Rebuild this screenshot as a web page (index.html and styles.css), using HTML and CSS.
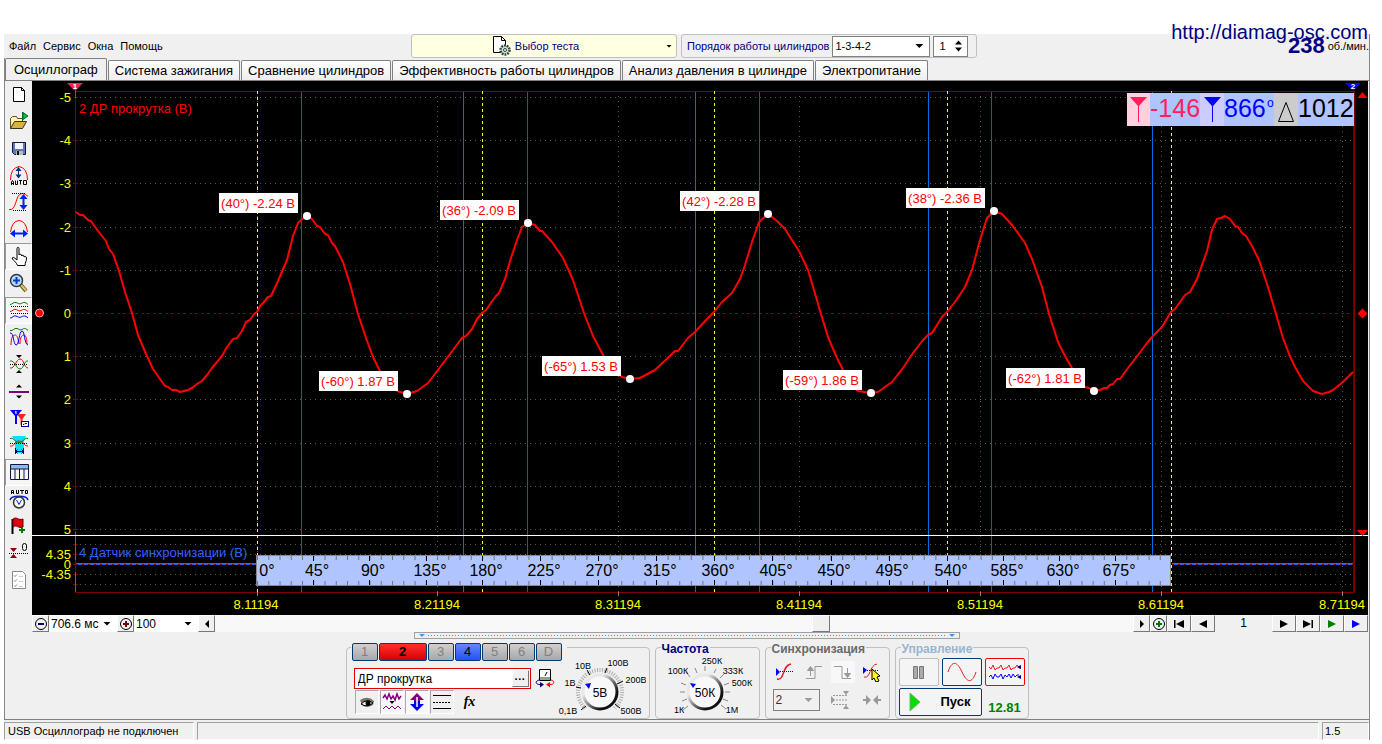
FILE: index.html
```html
<!DOCTYPE html>
<html lang="ru">
<head>
<meta charset="utf-8">
<title>Осциллограф</title>
<link rel="stylesheet" href="styles.css">
</head>
<body>
<div class="window">
  <header class="topbar">
    <nav class="menu">
      <button>Файл</button><button>Сервис</button><button>Окна</button><button>Помощь</button>
    </nav>
    <button class="test-picker">
      <svg class="test-icon" viewBox="0 0 20 22"><path d="M2.500 1.500h8l4 4v12h-12z" fill="#fff" stroke="#000"/><path d="M10.500 1.500v4h4" fill="none" stroke="#000"/><circle cx="14" cy="15" r="4.500" fill="#cfe0cf" stroke="#344" stroke-width="2.500" stroke-dasharray="1.800 1"/><circle cx="14" cy="15" r="1.500" fill="#fff" stroke="#344"/></svg>
      <span>Выбор теста</span><i class="caret"></i>
    </button>
    <div class="order">
      <label for="order">Порядок работы цилиндров</label>
      <span class="drop"><select id="order"><option>1-3-4-2</option></select></span>
      <span class="spin"><input type="number" value="1" aria-label="Цилиндр"><svg viewBox="0 0 9 16"><path d="M4.500 1L9 6H0zM4.500 15L9 10H0z"/></svg></span>
    </div>
    <div class="rpm"><b>238</b><span>об./мин.</span></div>
    <a class="site" href="#">http://diamag-osc.com</a>
  </header>

  <div class="body">
  <div class="tabs" role="tablist">
    <button role="tab" class="tab active">Осциллограф</button>
    <button role="tab" class="tab">Система зажигания</button>
    <button role="tab" class="tab">Сравнение цилиндров</button>
    <button role="tab" class="tab">Эффективность работы цилиндров</button>
    <button role="tab" class="tab">Анализ давления в цилиндре</button>
    <button role="tab" class="tab">Электропитание</button>
  </div>

  <main class="main">
    <div class="tools">
      <button aria-label="Новый"><svg viewBox="0 0 20 20"><path d="M4.500 3.500h8l3 3v11h-11z" fill="#fff" stroke="#000"/><path d="M12.500 3.500v3h3" fill="none" stroke="#000"/></svg></button>
      <button aria-label="Открыть"><svg viewBox="0 0 20 20"><path d="M1.500 17.500v-10l2-2h4l1 2h5v3" fill="#fff3a8" stroke="#665020"/><path d="M1.500 17.500l4-7h12l-4 7z" fill="#d8b048" stroke="#443010"/><path d="M13.500 1v9M14 1.500l5 3.500-5 3.500z" fill="#00c040" stroke="#007020"/></svg></button>
      <button aria-label="Сохранить"><svg viewBox="0 0 20 20"><path d="M3.500 4.500h13v12h-11l-2-2z" fill="#6674b8" stroke="#111840"/><path d="M6 5h8v6H6z" fill="#f4f6ff"/><path d="M7 13h7v4H7z" fill="#bbb"/><path d="M8 13h2v4H8z" fill="#111"/></svg></button>
      <button aria-label="Авто"><svg viewBox="0 0 20 20"><path d="M1.500 15Q1.500 3 10 1.500Q18.500 3 18.500 15" fill="none" stroke="#f00"/><path d="M9.500 3v9" stroke="#003080"/><path d="M9.500 2l3 4h-6zM9.500 13.500l3-4h-6z" fill="#003080"/><g fill="none" stroke="#000" stroke-width="1"><path d="M2.500 20v-3l1-1.500 1 1.500v3M2.500 18.500h2M6.500 15.500v4h2v-4M10 15.500h3M11.500 15.500v4M14.500 15.500h3v4h-3z"/></g></svg></button>
      <button aria-label="Амплитуда"><svg viewBox="0 0 20 20"><path d="M0 17.500c8 2 6-16 13-16 3 0 5 2 6 3" fill="none" stroke="#f00"/><path d="M3 1.500h14M4 18.500h14" stroke="#000" stroke-dasharray="1 1"/><path d="M14.500 4v12" stroke="#0020ff" stroke-width="2"/><path d="M14.500 2l4 5h-8zM14.500 18l4-5h-8z" fill="#0020ff"/></svg></button>
      <button aria-label="Период"><svg viewBox="0 0 20 20"><path d="M1.500 13Q3 2 10 1.500Q17 2 18.500 13" fill="none" stroke="#f00"/><path d="M4 14.500h12" stroke="#0020ff" stroke-width="2"/><path d="M1 14.500l5-4v8zM19 14.500l-5-4v8z" fill="#0020ff"/></svg></button>
      <button class="on hatch" aria-label="Рука"><svg viewBox="0 0 20 20"><path d="M8.500 19.500c-1-3-3-4-5-6.500-1-2 1-2 2-1l2.500 2V2.500c0-1.500 2-1.500 2 0V9c0-1 2.500-1 2.500 0v1c0-1 2.500-1 2.500 0v1c1-1 2.500-.5 2.500 1 0 4-1.500 4-1.500 7.500z" fill="#fff" stroke="#000"/></svg></button>
      <button aria-label="Масштаб"><svg viewBox="0 0 20 20"><path d="M12 12l5 6" stroke="#6a5a20" stroke-width="4"/><path d="M12 12l5 5.500" stroke="#e0c860" stroke-width="2"/><circle cx="7.500" cy="7.500" r="6" fill="#b8dcff" stroke="#334" stroke-width="1.500"/><path d="M7.500 4v7M4 7.500h7" stroke="#0040c0" stroke-width="2"/></svg></button>
      <button class="on" aria-label="Раздельно"><svg viewBox="0 0 20 20" fill="none"><path d="M1 4.500c3 0 3-3 6-2s3 2 5 1 4-2 7 1" stroke="#008000"/><path d="M1 11.500c3 0 3-3 6-2s3 2 5 1 4-2 7 1" stroke="#f00"/><path d="M1 18c3 0 3-3 6-2s3 2 5 1 4-2 7 1" stroke="#0000ff"/><path d="M2 6.500h17M2 13.500h17" stroke="#000" stroke-dasharray="1 1"/></svg></button>
      <button aria-label="Вместе"><svg viewBox="0 0 20 20" fill="none"><path d="M1 3.500c3 1 4-3 7-2s3 2 5 1 3-2 6 1" stroke="#008000"/><path d="M2 18C2 10 4 8 6 8s3 3 4 9M11 17c0-7 2-9 4-9s3 5 3 9" stroke="#f00"/><path d="M1 6c4-1 3 11 6 12s3-14 6-14 2 13 6 14" stroke="#0000ff"/></svg></button>
      <button aria-label="Наложение"><svg viewBox="0 0 20 20" fill="none"><path d="M1 7c5-1 6 8 10 8s4-9 8-8" stroke="#008000"/><path d="M1 14c5 1 6-9 10-9s4 9 8 9" stroke="#f00"/><path d="M1 10.500h18" stroke="#000" stroke-dasharray="1 1"/><path d="M7 1h6l-3 3zM7 19h6l-3-3z" fill="#000"/></svg></button>
      <button aria-label="Ноль"><svg viewBox="0 0 20 20"><path d="M0 11h20" stroke="#800080" stroke-width="2"/><path d="M7 6.500h6l-3-3zM7 14.500h6l-3 3z"/></svg></button>
      <button aria-label="Маркеры"><svg viewBox="0 0 20 20"><path d="M8 6h9l-3.500 5v6h-2v-6z" fill="#ff2020"/><path d="M1 2h12L8 8v8H6V8z" fill="#0000ff"/><path d="M7 3v3M6 4h1" stroke="#fff"/><rect x="12.500" y="13.500" width="7" height="5" fill="#fff" stroke="#0000a0"/><path d="M14 16.500h1l1-1h2" stroke="#0000a0" fill="none"/></svg></button>
      <button aria-label="Интервал"><svg viewBox="0 0 20 20" fill="none"><path d="M3 1h14l-2 5v12H6V6z" fill="#00e5ff"/><path d="M1 3.500c5-1 4 4 9 4s4-5 9-4" stroke="#008000"/><path d="M1 11c5 1 4-5 9-5s4 5 9 5" stroke="#f00"/><path d="M1 8.500h18" stroke="#000" stroke-dasharray="1 1"/><path d="M6.500 13v6M14.500 13v6M6.500 16.500h8M8.500 14.500l-2 2 2 2M12.500 14.500l2 2-2 2" stroke="#000080"/></svg></button>
      <button class="on" aria-label="Таблица"><svg viewBox="0 0 20 20"><rect x="2" y="3" width="17" height="4" fill="#8fb8f0"/><path d="M1.500 2.500h18v15h-18zM1.500 7h18M6 7v10M10.500 7v10M15 7v10" fill="none" stroke="#101840"/></svg></button>
      <button aria-label="Авто вольтметр"><svg viewBox="0 0 20 20"><g fill="none" stroke="#000"><path d="M2.500 5V1.500h2V5M2.500 3.500h2M7.500 1v3.500h2V1M11 1.500h4M13 1.500V5M16.500 1.500h2v3h-2z"/></g><path d="M1 11c1-5 17-5 18 0" fill="none" stroke="#0020c0" stroke-width="1.500"/><circle cx="10" cy="13.500" r="5.500" fill="#fff" stroke="#333" stroke-width="1.500"/><path d="M7.500 11l2.500 4.500 2.500-4.500" fill="none" stroke="#0020c0"/></svg></button>
      <button aria-label="Флажок"><svg viewBox="0 0 20 20"><path d="M3.500 3v15" stroke="#000" stroke-width="2"/><path d="M4 3c4-3 5 2 10 0v8c-5 2-6-3-10 0z" fill="#e00010" stroke="#600"/><path d="M13 11v6M10 14h6" stroke="#007800" stroke-width="2"/></svg></button>
      <button aria-label="Сброс нуля"><svg viewBox="0 0 20 20"><path d="M1 5h7l-3.500 4zM1 15h7l-3.500-4z" fill="#900010"/><path d="M0 10.500h19" stroke="#000" stroke-dasharray="1 1"/><rect x="13.500" y=".5" width="4" height="7" rx="2" fill="none" stroke="#000"/></svg></button>
      <button aria-label="Отчёт"><svg viewBox="0 0 20 20" fill="none" stroke="#888"><path d="M3.500 1.500h10l3 3v14h-13z" fill="#fff"/><path d="M5 5.500l1 1 2-2M5 10.500l1 1 2-2M5 15.500l1 1 2-2" /><path d="M10 6.500h4M10 11.500h4M10 16.500h4" stroke="#ccc"/></svg></button>
    </div>

    <div class="scope">
      <svg class="plot" viewBox="32 81 1336 534">
        <rect x="32" y="81" width="1336" height="534"/>
        <path class="grid" d="M75 97.500H1353M75 140.500H1353M75 183.500H1353M75 227.500H1353M75 270.500H1353M75 356.500H1353M75 399.500H1353M75 443.500H1353M75 486.500H1353M75 529.500H1353M75 544.500H1353M75 554.500H1353M75 574.500H1353M75 584.500H1353"/>
        <path class="grid" d="M257.500 96V592M437.500 96V592M618.500 96V592M799.500 96V592M980.500 96V592M1161.500 96V592M1342.500 96V592"/>
        <path d="M75 313.500H1353" stroke="#800000" stroke-dasharray="3 3"/>
        <path class="axis" d="M75.500 592.500V91.500H1354.500V592.500zM73 97.500h5M73 140.500h5M73 183.500h5M73 227.500h5M73 270.500h5M73 313.500h5M73 356.500h5M73 399.500h5M73 443.500h5M73 486.500h5M73 529.500h5M73 544.500h5M73 554.500h5M73 564.500h5M73 574.500h5M73 584.500h5"/>
        <path d="M75.500 90v8M75.500 532v28M75.500 572v20" stroke="#ff2060"/>
        <path d="M257.500 592v4M437.500 592v4M618.500 592v4M799.500 592v4M980.500 592v4M1161.500 592v4M1342.500 592v4" stroke="#888"/>
        <path d="M301.500 92V592M527.500 92V592M759.500 92V592M991.500 92V592" stroke="#e01010"/>
        <path d="M463.500 92V592M695.500 92V592M928.500 92V592M1152.500 92V592" stroke="#0070e0"/>
        <path d="M257.500 91V592M482.500 91V592M714.500 91V592M947.500 91V592M1171.500 91V592" stroke="#ff0" stroke-dasharray="3 3"/>
        <path d="M1353.500 88V592" stroke="#00f"/>
        <path d="M32 535.500H1368" stroke="#fff"/>
        <path d="M76 564H257M1172 564H1353" stroke="#3060ff" stroke-width="2"/>
        <path d="M76 564.500H257M1172 564.500H1353" stroke="#800000" stroke-dasharray="2 4"/>
        <polyline class="wave" points="76,212 80,215 83,215 88,220 91,221 98,231 106,241 109,249 113,254 119,271 125,292 132,313 138,335 146,354 153,369 160,379 165,386 168,387 172,390 176,390 180,392 184,391 188,390 192,388 197,384 202,381 207,375 212,368 217,362 222,356 227,347 233,339 237,338 242,331 246,322 250,320 254,314 257,312 260,306 263,303 268,297 271,296 278,281 287,260 293,236 298,223 301,220 307,216 312,219 317,226 320,227 325,234 328,235 332,243 335,246 343,262 350,284 358,314 366,338 373,357 380,371 388,384 397,391 407,394 417,391 428,383 438,370 450,354 462,338 466,336 472,329 477,319 482,313 486,310 493,300 496,296 499,293 505,279 510,261 517,240 522,227 528,223 535,225 540,231 542,231 552,242 563,258 573,280 584,313 593,336 603,355 612,370 622,377 630,379 640,378 655,370 672,354 675,351 678,351 688,338 695,332 707,319 714,312 722,302 732,293 740,279 745,265 752,242 759,222 768,214 777,221 785,229 790,237 799,251 808,270 814,290 821,314 828,337 837,358 843,370 850,384 858,391 871,393 878,392 892,382 903,368 913,353 923,340 928,335 932,333 942,317 947,312 955,302 965,287 972,270 980,240 987,218 994,211 1002,214 1012,225 1020,236 1025,243 1032,259 1042,287 1049,314 1058,342 1065,356 1072,368 1085,387 1089,388 1094,391 1100,390 1104,388 1107,388 1110,385 1113,384 1117,379 1120,379 1128,368 1138,355 1147,343 1153,336 1162,327 1171,312 1175,309 1185,295 1190,292 1197,279 1207,251 1212,230 1217,219 1221,218 1225,216 1230,219 1235,226 1238,227 1242,233 1246,236 1252,246 1259,260 1268,287 1276,314 1283,338 1289,354 1295,367 1303,381 1313,391 1322,394 1329,392 1333,390 1343,382 1353,372"/>

        <g class="ylab">
          <text x="71" y="102">-5</text><text x="71" y="145">-4</text><text x="71" y="188">-3</text><text x="71" y="232">-2</text><text x="71" y="275">-1</text><text x="71" y="318">0</text><text x="71" y="361">1</text><text x="71" y="404">2</text><text x="71" y="448">3</text><text x="71" y="491">4</text><text x="71" y="534">5</text>
          <text x="71" y="559">4.35</text><text x="71" y="569">0</text><text x="71" y="579">-4.35</text>
        </g>
        <g class="xlab">
          <text x="256" y="609">8.11194</text><text x="437" y="609">8.21194</text><text x="618" y="609">8.31194</text><text x="799" y="609">8.41194</text><text x="980" y="609">8.51194</text><text x="1161" y="609">8.61194</text><text x="1342" y="609">8.71194</text>
        </g>
        <text class="ch-red" x="79" y="113">2 ДР прокрутка (В)</text>
        <text class="ch-blue" x="79" y="557">4 Датчик синхронизации (В)</text>

        <rect x="256.500" y="555.500" width="914" height="30" fill="#b0c4ff" stroke="#888"/>
        <g class="ticks">
          <path pathLength="20" d="M257 558H482"/><path pathLength="20" d="M482 558H714"/><path pathLength="20" d="M714 558H947"/><path pathLength="20" d="M947 558H1171"/>
          <path pathLength="20" d="M257 583H482"/><path pathLength="20" d="M482 583H714"/><path pathLength="20" d="M714 583H947"/><path pathLength="20" d="M947 583H1171"/>
        </g>
        <path d="M313.500 556v5M313.500 580v5M369.500 556v5M369.500 580v5M426.500 556v5M426.500 580v5M482.500 556v5M482.500 580v5M540.500 556v5M540.500 580v5M598.500 556v5M598.500 580v5M656.500 556v5M656.500 580v5M714.500 556v5M714.500 580v5M772.500 556v5M772.500 580v5M831.500 556v5M831.500 580v5M889.500 556v5M889.500 580v5M947.500 556v5M947.500 580v5M1003.500 556v5M1003.500 580v5M1059.500 556v5M1059.500 580v5M1115.500 556v5M1115.500 580v5" stroke="#000"/>
        <g class="deg">
          <text x="267" y="576">0°</text><text x="317" y="576">45°</text><text x="373" y="576">90°</text><text x="430" y="576">135°</text><text x="486" y="576">180°</text><text x="544" y="576">225°</text><text x="602" y="576">270°</text><text x="660" y="576">315°</text><text x="718" y="576">360°</text><text x="776" y="576">405°</text><text x="834" y="576">450°</text><text x="892" y="576">495°</text><text x="951" y="576">540°</text><text x="1007" y="576">585°</text><text x="1063" y="576">630°</text><text x="1119" y="576">675°</text>
        </g>

        <g fill="#fff">
          <circle cx="307" cy="216" r="4"/><circle cx="528" cy="223" r="4"/><circle cx="768" cy="214" r="4"/><circle cx="994" cy="211" r="4"/>
          <circle cx="407" cy="394" r="4"/><circle cx="630" cy="379" r="4"/><circle cx="871" cy="393" r="4"/><circle cx="1094" cy="391" r="4"/>
          <rect x="219" y="193" width="79" height="20"/><rect x="440" y="200" width="79" height="20"/><rect x="680" y="191" width="79" height="20"/><rect x="906" y="188" width="79" height="20"/>
          <rect x="319" y="371" width="79" height="20"/><rect x="542" y="356" width="79" height="20"/><rect x="783" y="370" width="79" height="20"/><rect x="1006" y="368" width="79" height="20"/>
        </g>
        <g class="peak">
          <text x="258" y="208">(40°) -2.24 В</text><text x="479" y="215">(36°) -2.09 В</text><text x="719" y="206">(42°) -2.28 В</text><text x="945" y="203">(38°) -2.36 В</text>
          <text x="358" y="386">(-60°) 1.87 В</text><text x="581" y="371">(-65°) 1.53 В</text><text x="822" y="385">(-59°) 1.86 В</text><text x="1045" y="383">(-62°) 1.81 В</text>
        </g>

        <rect x="1127" y="93" width="227" height="33" fill="#b0c4ff"/>
        <rect x="1127" y="93" width="23" height="33" fill="#ffd0e0"/><rect x="1200" y="93" width="24" height="33" fill="#ccccff"/><rect x="1274" y="93" width="24" height="33" fill="#ccc"/>
        <path d="M1130 97h17l-8 9v16h-1v-16z" fill="#ff1f5a"/><path d="M1204 97h17l-8 9v16h-1v-16z" fill="#00f"/><path d="M1278.500 121.500l7.500-19 7.500 19z" fill="none" stroke="#000"/>
        <text class="read" x="1150" y="117" fill="#ff1f5a">-146</text><text class="read" x="1224" y="117" fill="#00f">866</text><text x="1267" y="107" class="small-deg">o</text><text class="read" x="1298" y="117" fill="#000">1012</text>

        <path d="M67 83h16l-7 7h-2z" fill="#ff2060"/><path d="M1345 83h16l-7 7h-2z" fill="#00f"/>
        <text class="mark" x="75" y="89">1</text><text class="mark" x="1353" y="89">2</text>
        <circle cx="39.500" cy="313" r="4" fill="#f00" stroke="#faa" stroke-width="1"/>
        <path d="M1357.500 98h10l-5-6zM1357.500 313.500l5-5 5 5-5 5zM1357.500 530h10v1l-5 5-5-5z" fill="#f00"/>
      </svg>

      <div class="scroll">
        <button class="raised sq" aria-label="Уменьшить"><svg viewBox="0 0 14 14"><circle cx="7" cy="7" r="5.500" fill="none" stroke="#000"/><path d="M4 7h6" stroke="#000080" stroke-width="2"/></svg></button>
        <span class="drop flat span-time"><select aria-label="Развёртка"><option>706.6 мс</option></select></span>
        <button class="raised sq" aria-label="Увеличить"><svg viewBox="0 0 14 14"><circle cx="7" cy="7" r="5.500" fill="none" stroke="#000"/><path d="M4 7h6M7 4v6" stroke="#800000" stroke-width="2"/></svg></button>
        <span class="drop flat span-zoom"><select aria-label="Масштаб"><option>100</option></select></span>
        <button class="raised sq" aria-label="Влево"><svg viewBox="0 0 14 14"><path d="M9 3v8L5 7z"/></svg></button>
        <div class="track"><div class="thumb"></div></div>
        <button class="raised sq" aria-label="Вправо"><svg viewBox="0 0 14 14"><path d="M5 3v8l4-4z"/></svg></button>
        <button class="raised sq" aria-label="Добавить"><svg viewBox="0 0 14 14"><circle cx="7" cy="7" r="5.500" fill="none" stroke="#000"/><path d="M4 7h6M7 4v6" stroke="#007800" stroke-width="2"/></svg></button>
        <button class="raised nav" aria-label="В начало"><svg viewBox="0 0 14 14"><path d="M2 3h1.500v8H2zM12 3v8L4 7z"/></svg></button>
        <button class="raised nav" aria-label="Назад"><svg viewBox="0 0 14 14"><path d="M11 3v8L3 7z"/></svg></button>
        <span class="page">1</span>
        <button class="raised nav" aria-label="Вперёд"><svg viewBox="0 0 14 14"><path d="M3 3v8l8-4z"/></svg></button>
        <button class="raised nav" aria-label="В конец"><svg viewBox="0 0 14 14"><path d="M2 3v8l8-4zM10.500 3H12v8h-1.500z"/></svg></button>
        <button class="raised nav" aria-label="Пуск"><svg viewBox="0 0 14 14"><path d="M3 3v8l8-4z" fill="#008000"/></svg></button>
        <button class="raised nav" aria-label="Запись"><svg viewBox="0 0 14 14"><path d="M3 3v8l8-4z" fill="#00f"/></svg></button>
      </div>
    </div>
  </main>

  <div class="splitter"><i class="caret"></i><span></span><i class="caret"></i></div>

  <section class="panels">
    <fieldset class="panel channel">
      <legend class="channels"><button>1</button><button class="red">2</button><button>3</button><button class="blue">4</button><button>5</button><button>6</button><button>D</button></legend>
      <div class="channel-body">
        <div class="channel-left">
          <div class="name-row">
            <span class="name"><input type="text" value="ДР прокрутка" aria-label="Датчик"><button class="raised">···</button></span>
            <svg class="swap" viewBox="0 0 20 20"><path d="M4.500 1.500h11v11h-11z" fill="#fff" stroke="#000"/><path d="M5 9h10v3H5z" fill="#8a8"/><path d="M10 8l2-4" stroke="#000"/><path d="M4 12c-4 1-4 5 2 4.500" fill="none" stroke="#000080"/><path d="M5 14l4 2.500-4 3z" fill="#000080"/><path d="M16 12c4 1 4 5-2 4.500" fill="none" stroke="#f00"/><path d="M15 14l-4 2.500 4 3z" fill="#f00"/></svg>
          </div>
          <div class="modes">
            <button class="on" aria-label="Видимость"><svg viewBox="0 0 20 20"><path d="M3 8q8-5 14 1l-1 4q-7 4-11 0z" fill="#776"/><path d="M4 12q6-6 12-1-6 5-12 1z" fill="#eee" stroke="#000"/><circle cx="11" cy="11" r="2.500"/></svg></button>
            <button class="on hatch" aria-label="Фильтр"><svg viewBox="0 0 20 20" fill="none" stroke="#800080"><path d="M1 6l2-3 2 4 2-5 2 5 2-3 2 4 2-6 2 5 2-3" stroke-width="1.500"/><path d="M1 17l3-3 3 3 3-3 3 3 3-3 3 3"/><path d="M7.500 9h5L10 12z" fill="#000" stroke="none"/></svg></button>
            <button class="on hatch" aria-label="Инверсия"><svg viewBox="0 0 20 20"><path d="M10 1l7 7h-4v3H7V8H3z" fill="#800080"/><path d="M10 19l7-7h-4V9H7v3H3z" fill="#0000ff"/><path d="M10 5v10" stroke="#fff" stroke-width="1.500"/></svg></button>
            <button class="on" aria-label="Пределы"><svg viewBox="0 0 20 20"><path d="M1 3.500h18M1 16.500h18" stroke="#000"/><path d="M1 10.500h18" stroke="#000" stroke-dasharray="2 1"/></svg></button>
            <button class="fx" aria-label="Функция"><i>fx</i></button>
          </div>
        </div>
        <svg class="knob" viewBox="556 656 90 62">
          <defs><linearGradient id="rim" x1="0" y1="0" x2="1" y2="1"><stop offset=".3" stop-color="#e8e8e8"/><stop offset=".75" stop-color="#111"/></linearGradient></defs>
          <circle cx="600" cy="692" r="22" fill="none" stroke="#aaa" stroke-width="4" stroke-dasharray="1 1.500"/>
          <path d="M585 708l-6 8h42l-6-8z" fill="#f0f0f0"/>
          <path d="M586 706l-5 4M581 688l-5-1M590 675l-3-5M605 673l2-5M617 684l6-3M615 704l5 4" stroke="#000"/>
          <circle cx="600" cy="692" r="17" fill="#f8f8f8" stroke="url(#rim)" stroke-width="3"/>
          <path d="M585 684l6-1-2 6z" fill="#00f"/>
          <text x="600" y="697" class="knob-val">5В</text>
          <text x="583" y="669">10В</text><text x="618" y="666">100В</text><text x="570" y="686">1В</text><text x="636" y="683">200В</text><text x="568" y="714">0,1В</text><text x="631" y="714">500В</text>
        </svg>
      </div>
    </fieldset>

    <fieldset class="panel freq">
      <legend class="navy">Частота</legend>
      <svg class="knob" viewBox="658 656 98 62">
        <path d="M687 706l-5 4M686 699l-5 2M684 692h-5M685 685l-5-2M689 677l-4-5M696 673l-2-5M704 671v-5M713 673l2-4M719 678l4-4M723 685l5-2M724 692h5M722 699l5 2M720 705l5 4" stroke="#888"/>
        <circle cx="704" cy="692" r="17" fill="#f8f8f8" stroke="url(#rim)" stroke-width="3"/>
        <path d="M689 683l6 1-3 4z" fill="#00f"/>
        <text x="704" y="697" class="knob-val">50К</text>
        <text x="711" y="664">250К</text><text x="677" y="674">100К</text><text x="732" y="674">333К</text><text x="741" y="686">500К</text><text x="678" y="713">1К</text><text x="731" y="713">1М</text>
      </svg>
    </fieldset>

    <fieldset class="panel sync">
      <legend class="grey">Синхронизация</legend>
      <div class="sync-row">
        <button aria-label="Уровень"><svg viewBox="0 0 20 20" fill="none"><path d="M2 17c8 2 5-14 14-15" stroke="#e02020" stroke-width="1.500"/><path d="M5 9.500h14" stroke="#00f" stroke-dasharray="1 1"/><path d="M1 6v8l4-4z" fill="#00f"/></svg></button>
        <button aria-label="Фронт"><svg viewBox="0 0 20 20" fill="none" stroke="#999"><path d="M2 16.500h9v-12h7M6.500 14V6"/><path d="M3.500 8.500l3-4 3 4z" fill="#999"/></svg></button>
        <button class="hatch" aria-label="Спад"><svg viewBox="0 0 20 20" fill="none" stroke="#999"><path d="M1 4.500h8v12h9M14.500 6v8"/><path d="M11.500 11.500l3 4 3-4z" fill="#999"/></svg></button>
        <button aria-label="Выбор уровня"><svg viewBox="0 0 20 20" fill="none"><path d="M2 15c7 2 5-12 13-13" stroke="#e02020"/><path d="M5 8.500h12" stroke="#00f" stroke-dasharray="1 1"/><path d="M1 5v7l4-4z" fill="#00f"/><path d="M10 7l8 7-3 1 2 4-3 1-2-4-2 2z" fill="#ff0" stroke="#000"/></svg></button>
      </div>
      <div class="sync-row">
        <span class="drop sync-ch"><select aria-label="Канал синхронизации"><option>2</option></select></span>
        <button aria-label="Пределы синхронизации"><svg viewBox="0 0 20 20" fill="#999"><path d="M1 6v8l4-4zM13 1h6l-3 4zM13 19h6l-3-4z"/><path d="M3 5.500h15M3 14.500h15M6 10h12" stroke="#999" stroke-dasharray="2 1"/></svg></button>
        <button aria-label="Сжать"><svg viewBox="0 0 20 20" fill="#999"><path d="M1 9h3V5l5 5-5 5v-4H1zM19 9h-3V5l-5 5 5 5v-4h3z"/></svg></button>
      </div>
    </fieldset>

    <fieldset class="panel ctrl">
      <legend class="pale">Управление</legend>
      <div class="ctrl-grid">
        <button class="plain" aria-label="Пауза"><svg viewBox="0 0 36 24"><path d="M12.500 6.500h4v12h-4zM18.500 6.500h4v12h-4z" fill="#aaa" stroke="#777"/></svg></button>
        <button aria-label="Один канал"><svg viewBox="0 0 36 24"><path d="M4 12C8 0 13 1 18 12s10 12 14 0" fill="none" stroke="#e02020"/></svg></button>
        <button class="hot" aria-label="Все каналы"><svg viewBox="0 0 36 24" fill="none"><path d="M2 7l2 2 2-4 2 5 2-2h2l2-3 2 5 2-2h2l2-3 2 5 2-2h2l2-3 2 3h2" stroke="#e02020"/><path d="M2 17l2-2 2 4 2-5 2 3h2l2-3 2 5 2-4 2 2 2-3 2 4 2-4 2 3 2-2h2" stroke="#00f"/><path d="M34 5v4l-4-2zM34 15v4l-4-2z" fill="#000080"/></svg></button>
        <button class="start"><svg viewBox="0 0 14 20"><path d="M2 1v18l10-9z" fill="#0d0" stroke="#6b6"/></svg><span>Пуск</span></button>
        <output>12.81</output>
      </div>
    </fieldset>
  </section>
  </div>

  <footer class="status"><span class="msg">USB Осциллограф не подключен</span><span class="fill"></span><span class="ver">1.5</span></footer>
</div>
</body>
</html>
```
FILE: styles.css
```css
* { box-sizing: border-box; }
body { margin: 0; background: #fff; color: #000; font: 11px/14px "Liberation Sans", Arial, sans-serif; }
button, input, select { font: inherit; color: inherit; margin: 0; padding: 0; border: 0; border-radius: 0; background: none; }
svg { display: block; }
select, input { appearance: none; outline: 0; }
input[type="number"]::-webkit-inner-spin-button { appearance: none; }

.window { margin: 34px 12px 0 4px; background: #f0f0f0; border-right: 1px solid #888; }
.body { border-left: 1px solid #888; }

.topbar { position: relative; display: flex; height: 24px; align-items: stretch; }
.menu { display: flex; flex: 0 0 407px; gap: 7px; padding-left: 5px; align-items: center; }
.caret { width: 6px; height: 3px; background: currentColor; clip-path: polygon(0 0, 100% 0, 50% 100%); }
.test-picker { position: relative; flex: 0 0 266px; display: flex; align-items: center; justify-content: center; gap: 4px; padding-right: 18px; background: #ffffe1; border: 1px solid #c0c0c0; border-radius: 3px; color: #000080; }
.test-picker .caret { position: absolute; right: 4px; color: #000; }
.test-icon { width: 20px; height: 22px; }
.order { display: flex; align-items: center; gap: 3px; margin-left: 4px; padding: 0 8px 0 5px; border: 1px solid #c0c0c0; border-radius: 3px; color: #000080; }
.drop { position: relative; display: flex; width: 98px; height: 21px; background: #fff; border: 1px solid #808080; color: #000; }
.drop select { width: 100%; padding-left: 2px; }
.drop::after { content: ""; position: absolute; right: 6px; top: 50%; margin-top: -2px; width: 8px; height: 4px; background: currentColor; clip-path: polygon(0 0, 100% 0, 50% 100%); pointer-events: none; }
.spin { display: flex; align-items: center; width: 35px; height: 21px; padding: 0 5px; background: #fff; border: 1px solid #808080; color: #000; }
.spin input { width: 16px; }
.spin svg { width: 9px; height: 16px; }
.rpm { display: flex; align-items: center; gap: 3px; margin-left: auto; }
.rpm b { font-size: 22px; color: #000080; }
.site { position: absolute; right: 1px; top: -14px; font-size: 20px; line-height: 24px; color: #000080; text-decoration: none; }

.tabs { display: flex; align-items: flex-end; gap: 1px; height: 23px; border-bottom: 1px solid #808080; }
.tab { height: 20px; padding: 0 6px; font-size: 13px; line-height: 18px; background: linear-gradient(#fff, #eee); border: 1px solid #808080; border-bottom: 0; border-radius: 2px 2px 0 0; white-space: nowrap; }
.tab.active { height: 22px; padding: 0 8px; background: #f0f0f0; }

.main { display: flex; padding-right: 1px; }
.tools { flex: 0 0 27px; display: flex; flex-direction: column; }
.tools button { height: 27px; display: flex; justify-content: center; padding-top: 2px; border: 1px solid transparent; }
.tools svg { width: 20px; height: 20px; }
.tools .on { border-color: #999 #fff #fff #999; background: #f6f6f6; }
.hatch { background: #f8f8f8; }
.scope { flex: 1; min-width: 0; }
.plot { width: 100%; height: auto; }
.plot .grid { stroke: #5a5a5a; stroke-dasharray: 1 4; }
.plot .axis { fill: none; stroke: #800000; }
.plot .wave { fill: none; stroke: #f00; stroke-width: 2; stroke-linejoin: round; }
.plot text { font-size: 13px; }
.ylab { fill: #ff0; text-anchor: end; }
.xlab { fill: #ff0; text-anchor: middle; }
.ch-red { fill: #f00; }
.ch-blue { fill: #3060ff; }
.ticks path { stroke: #777; stroke-width: 4; stroke-dasharray: .09 .91; }
.plot .deg text { font-size: 16px; text-anchor: middle; }
.peak { fill: #f00; text-anchor: middle; }
.plot .read { font-size: 25px; }
.plot .small-deg { font-size: 12px; fill: #00f; }
.plot .mark { font-size: 8px; font-weight: bold; fill: #fff; text-anchor: middle; }

.scroll { display: flex; height: 17px; align-items: stretch; }
.raised { background: #f0f0f0; border: 1px solid; border-color: #fff #777 #777 #fff; display: grid; place-items: center; }
.raised svg { width: 14px; height: 14px; }
.sq { flex: 0 0 17px; }
.nav { flex: 0 0 24px; }
.drop.flat { height: auto; border: 0; font-size: 12px; }
.span-time { flex: 0 0 68px; }
.span-zoom { flex: 0 0 64px; }
.track { flex: 1; padding-left: 597px; background: #f8f8f8; }
.thumb { width: 18px; height: 17px; background: #f0f0f0; border: 1px solid; border-color: #fff #777 #777 #fff; }
.page { flex: 0 0 57px; text-align: center; line-height: 17px; font-size: 12px; }

.splitter { width: 546px; height: 7px; margin: 0 auto; display: flex; align-items: center; gap: 3px; padding: 0 4px; border: 1px solid #a0a0a0; color: #3399ff; }
.splitter span { flex: 1; height: 1px; background: repeating-linear-gradient(90deg, #3399ff 0 1px, transparent 1px 3px); }

.panels { display: flex; justify-content: center; gap: 5px; padding: 4px 0 0; }
.panel { position: relative; height: 76px; margin: 0; padding: 0; border: 0; min-width: 0; }
.panel::before { content: ""; position: absolute; inset: -8px 0 0; border: 1px solid #c0c0c0; border-radius: 4px; pointer-events: none; }
.panel.channel::before { top: -14px; }
.panel legend { position: relative; z-index: 1; margin-left: 6px; padding: 0 1px; background: #f0f0f0; font-size: 12px; line-height: 12px; font-weight: bold; }
.navy { color: #000080; }
.grey { color: #6a6a6a; }
.pale { color: #99b4d1; }

.channel { flex: 0 0 304px; }
.panel legend.channels { display: flex; gap: 1px; margin-left: 5px; padding: 0 5px 0 1px; font-weight: normal; font-size: 13px; }
.channels button { width: 26px; height: 18px; border: 1px solid #003c74; border-radius: 2px; background: linear-gradient(#d0d0d0, #a8a8a8); color: #808080; line-height: 16px; }
.channels .red { width: 48px; background: linear-gradient(#ff3030, #d80000); color: #000; font-weight: bold; }
.channels .blue { background: linear-gradient(#6088ff, #2850f0); color: #000; }
.channel-body { display: flex; }
.channel-left { padding: 7px 0 0 8px; }
.name-row { display: flex; gap: 4px; }
.name { display: flex; width: 177px; height: 21px; border: 1px solid #e00000; background: #fff; padding: 1px; }
.name input { flex: 1; min-width: 0; padding-left: 2px; font-size: 12px; }
.name .raised { width: 17px; font-weight: bold; }
.swap { width: 20px; height: 20px; }
.modes { display: flex; gap: 1px; margin-top: 1px; padding-left: 1px; }
.modes button { width: 24px; height: 24px; display: grid; place-items: center; border: 1px solid transparent; }
.modes .on { border-color: #aaa #fff #fff #aaa; }
.modes svg { width: 20px; height: 20px; }
.modes .fx { font: bold 14px/20px "Liberation Serif", serif; width: 30px; }
.knob text { font-size: 9px; text-anchor: middle; }
.knob .knob-val { font-size: 12px; }
.channel .knob { width: 90px; height: 62px; margin: -5px 0 0 1px; flex: none; }

.freq { flex: 0 0 105px; }
.freq .knob { width: 98px; height: 62px; margin: 1px 0 0 4px; }
.sync { flex: 0 0 125px; }
.sync-row { display: flex; justify-content: space-between; padding: 6px 6px 0 8px; }
.sync-row button { width: 24px; height: 22px; display: grid; place-items: center; }
.sync-row svg { width: 20px; height: 20px; }
.drop.sync-ch { width: 47px; height: 22px; background: #f0f0f0; color: #333; font-size: 12px; }
.drop.sync-ch::after { background: #999; }
.ctrl { flex: 0 0 134px; }
.ctrl-grid { display: grid; grid-template-columns: repeat(3, 40px); gap: 2px 3px; padding: 3px 4px 0; }
.ctrl-grid button { height: 28px; display: grid; place-items: center; border: 1px solid #003c74; border-radius: 2px; background: #f4f4f4; }
.ctrl-grid .plain { border-color: #c0c0c0; }
.ctrl-grid .hot { border-color: #f00; }
.ctrl-grid button svg { width: 36px; height: 24px; }
.ctrl-grid .start { grid-column: span 2; display: flex; align-items: center; gap: 19px; padding-left: 8px; font-size: 13px; font-weight: bold; }
.ctrl-grid .start svg { width: 14px; height: 20px; }
.ctrl-grid output { align-self: end; text-align: center; font-size: 13px; line-height: 16px; font-weight: bold; color: #008000; }

.status { display: flex; gap: 3px; padding-top: 2px; border-top: 1px solid #808080; }
.status span { height: 18px; line-height: 17px; border: 1px solid; border-color: #a0a0a0 #fff #fff #a0a0a0; }
.msg { flex: 0 0 190px; padding-left: 3px; }
.fill { flex: 1; }
.ver { flex: 0 0 47px; padding-left: 2px; }
```
